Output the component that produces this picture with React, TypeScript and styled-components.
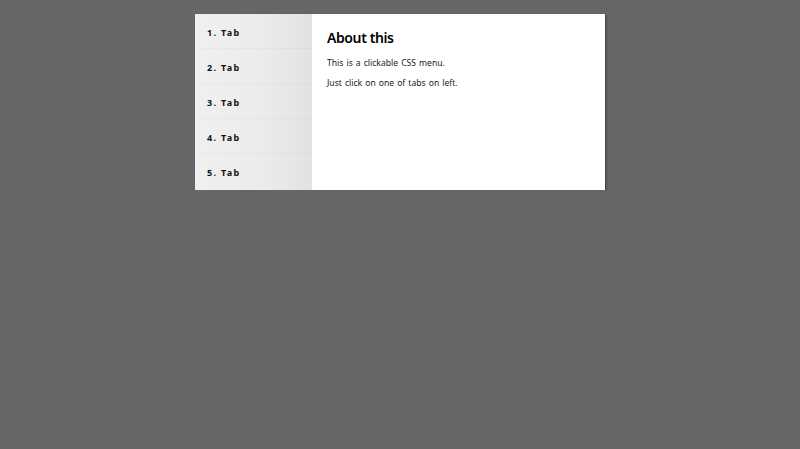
import React from "react";
import styled, { createGlobalStyle } from "styled-components";

const Global = createGlobalStyle`
  html, body { margin: 0; padding: 0; background: #666666; }
  body { font-family: "Noto Sans", "Open Sans", sans-serif; }
`;

const Page = styled.div`
  padding-top: 14px;
  display: flex;
  justify-content: center;
`;

const Card = styled.div`
  width: 410px;
  height: 176px;
  background: #ffffff;
  display: flex;
  box-shadow: 1px 1px 2px rgba(0, 0, 0, 0.45);
`;

const TabList = styled.ul`
  list-style: none;
  margin: 0;
  padding: 0;
  width: 117px;
  display: flex;
  flex-direction: column;
  background: linear-gradient(to right, #f0f0f0 0%, #ebebeb 60%, #e2e2e2 100%);
`;

const TabItem = styled.li<{ $last?: boolean }>`
  height: 35px;
  box-sizing: border-box;
  display: flex;
  align-items: center;
  padding: 2px 0 0 12px;
  font-size: 9px;
  font-weight: 700;
  letter-spacing: 1.3px;
  color: #111;
  border-bottom: ${(p) => (p.$last ? "none" : "1px solid rgba(0,0,0,0.025)")};
`;

const Content = styled.div`
  flex: 1;
  padding: 14px 15px;
`;

const Title = styled.h2`
  margin: 0 0 9px;
  font-size: 14px;
  font-weight: 600;
  letter-spacing: -0.4px;
  color: #000;
  line-height: 20px;
`;

const Para = styled.p`
  margin: 0 0 8px;
  font-size: 8.6px;
  line-height: 12px;
  word-spacing: 0.8px;
  color: #222;
`;

export default function App() {
  const tabs = ["1. Tab", "2. Tab", "3. Tab", "4. Tab", "5. Tab"];
  return (
    <>
      <Global />
      <Page>
        <Card>
          <TabList>
            {tabs.map((t, i) => (
              <TabItem key={t} $last={i === tabs.length - 1}>
                {t}
              </TabItem>
            ))}
          </TabList>
          <Content>
            <Title>About this</Title>
            <Para>This is a clickable CSS menu.</Para>
            <Para>Just click on one of tabs on left.</Para>
          </Content>
        </Card>
      </Page>
    </>
  );
}
